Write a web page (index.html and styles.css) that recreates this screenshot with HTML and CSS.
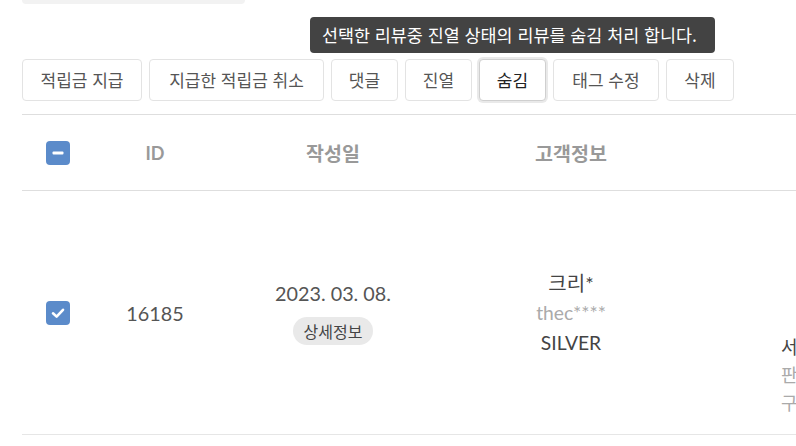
FILE: index.html
```html
<!DOCTYPE html>
<html lang="ko">
<head>
<meta charset="utf-8">
<link rel="stylesheet" href="styles.css">
</head>
<body>
<div class="page">
  <div class="search-stub"></div>
  <div class="toolbar">
    <div class="tooltip">선택한 리뷰중 진열 상태의 리뷰를 숨김 처리 합니다.</div>
    <button class="btn">적립금 지급</button>
    <button class="btn">지급한 적립금 취소</button>
    <button class="btn">댓글</button>
    <button class="btn">진열</button>
    <button class="btn active">숨김</button>
    <button class="btn">태그 수정</button>
    <button class="btn">삭제</button>
  </div>
  <div class="table">
    <div class="row head">
      <div class="cell"><span class="check"><svg width="24" height="24" viewBox="0 0 24 24"><rect x="6.5" y="10.5" width="11" height="3" rx="1" fill="#fff"/></svg></span></div>
      <div class="cell latin">ID</div>
      <div class="cell">작성일</div>
      <div class="cell">고객정보</div>
      <div class="cell"></div>
    </div>
    <div class="row body">
      <div class="cell"><span class="check"><svg width="24" height="24" viewBox="0 0 24 24"><path d="M7 12.3 L10.6 15.6 L17 8.8" fill="none" stroke="#fff" stroke-width="2.6" stroke-linecap="round" stroke-linejoin="round"/></svg></span></div>
      <div class="cell num">16185</div>
      <div class="cell stack">
        <div class="date">2023. 03. 08.</div>
        <span class="badge">상세정보</span>
      </div>
      <div class="cell stack customer">
        <div class="name">크리*</div>
        <div class="uid">thec****</div>
        <div class="grade">SILVER</div>
      </div>
      <div class="cell product">
        <div class="p1">서</div>
        <div class="p2">판</div>
        <div class="p3">구</div>
      </div>
    </div>
  </div>
</div>
</body>
</html>
```

FILE: styles.css
```css
* { box-sizing: border-box; }
html, body { margin: 0; padding: 0; background: #fff; overflow: hidden; }
body {
  width: 796px;
  height: 446px;
  font-family: Lato, "Noto Sans CJK KR", sans-serif;
  color: #444;
}
.page { padding-left: 22px; }
.search-stub {
  width: 223px;
  height: 4px;
  background: #f2f2f2;
  border-radius: 0 0 6px 6px;
}
.toolbar {
  position: relative;
  display: flex;
  gap: 7px;
  margin-top: 55px;
  height: 42px;
}
.tooltip {
  position: absolute;
  left: 288px;
  top: -42px;
  width: 405px;
  height: 36px;
  background: #434343;
  color: #fff;
  border-radius: 4px;
  font-family: "Noto Sans CJK KR", sans-serif;
  font-size: 17.4px;
  font-weight: 400;
  line-height: 35px;
  padding-left: 12px;
  white-space: nowrap;
}
.btn {
  height: 42px;
  padding: 0;
  background: #fff;
  border: 1px solid #e3e3e3;
  border-radius: 4px;
  font-family: "Noto Sans CJK KR", sans-serif;
  font-size: 17px;
  color: #555;
  line-height: 40px;
  margin: 0;
  text-align: center;
  white-space: nowrap;
  flex: none;
}
.btn:nth-child(2) { width: 120px; }
.btn:nth-child(3) { width: 175px; }
.btn:nth-child(4) { width: 67px; }
.btn:nth-child(5) { width: 67px; }
.btn:nth-child(6) { width: 67px; }
.btn:nth-child(7) { width: 106px; }
.btn:nth-child(8) { width: 68px; }
.btn.active {
  color: #222;
  border-color: #cfcfcf;
  box-shadow: 0 0 0 2px #e9e9e9;
}
.table { margin-top: 13px; }
.row {
  display: grid;
  grid-template-columns: 72px 122px 234px 242px 1fr;
  border-top: 1px solid #dedede;
}
.row.head { height: 76px; }
.row.body { height: 245px; border-bottom: 1px solid #e6e6e6; }
.cell {
  display: flex;
  align-items: center;
  justify-content: center;
  text-align: center;
}
.head .cell {
  font-weight: 700;
  font-size: 19.5px;
  color: #999;
  font-family: Lato, "Noto Sans CJK KR", sans-serif;
}
.head .cell.latin { font-size: 18px; }
.check {
  width: 24px;
  height: 24px;
  border-radius: 4px;
  background: #5b8bca;
  display: block;
}
.check svg { display: block; }
.num { font-size: 19.8px; color: #555; }
.stack { flex-direction: column; }
.date { font-size: 19.8px; color: #555; line-height: 26px; }
.badge {
  margin-top: 11px;
  background: #e9e9e9;
  border-radius: 14px;
  padding: 0 11px;
  height: 28px;
  line-height: 28px;
  font-family: "Noto Sans CJK KR", sans-serif;
  font-size: 16px;
  color: #444;
}
.customer { font-size: 19.3px; line-height: 30px; color: #444; }
.name { font-size: 20px; }
.uid { color: #aaa; }
.product {
  flex-direction: column;
  align-items: flex-start;
  justify-content: flex-start;
  padding-left: 89px;
  padding-top: 141px;
  font-family: "Noto Sans CJK KR", sans-serif;
  font-size: 18px;
  line-height: 28px;
  overflow: hidden;
  white-space: nowrap;
}
.p1 { color: #444; }
.p2, .p3 { color: #aaa; }
```
